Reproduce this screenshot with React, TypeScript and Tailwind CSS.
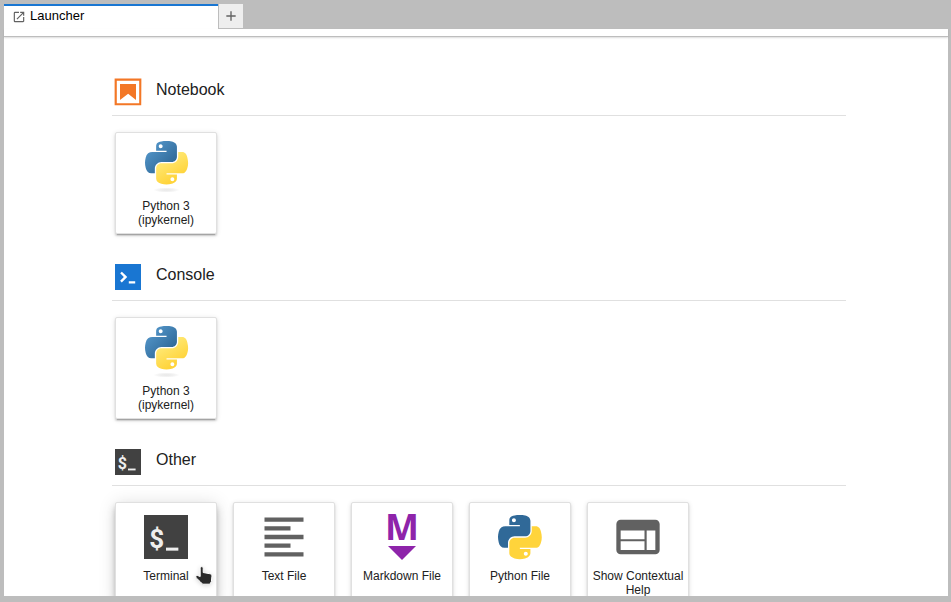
import type { ReactNode } from "react";

function PythonShapes({ blue, yellow }: { blue: string; yellow: string }) {
  return (
    <>
      <path
        fill={blue}
        d="M54.919 0c-4.584.021-8.961.412-12.813 1.094-11.346 2.004-13.406 6.2-13.406 13.937v10.219h26.812v3.406H18.637c-7.792 0-14.616 4.684-16.75 13.594-2.462 10.213-2.571 16.586 0 27.25 1.906 7.938 6.458 13.594 14.25 13.594h9.219v-12.25c0-8.85 7.657-16.657 16.75-16.657h26.781c7.455 0 13.407-6.138 13.407-13.625V15.031c0-7.266-6.13-12.725-13.407-13.937C64.282.327 59.502-.02 54.919 0zm-14.5 8.219c2.769 0 5.031 2.298 5.031 5.125 0 2.816-2.262 5.094-5.031 5.094-2.78 0-5.032-2.278-5.032-5.094 0-2.827 2.252-5.125 5.032-5.125z"
      />
      <path
        fill={yellow}
        d="M85.638 28.657v11.906c0 9.231-7.826 17-16.75 17H42.106c-7.336 0-13.406 6.279-13.406 13.625V96.72c0 7.266 6.319 11.54 13.406 13.625 8.488 2.496 16.626 2.947 26.782 0 6.75-1.954 13.406-5.888 13.406-13.625V86.5H55.512v-3.406h40.188c7.793 0 10.696-5.435 13.406-13.594 2.8-8.399 2.68-16.476 0-27.25-1.926-7.757-5.603-13.593-13.406-13.593zM70.575 93.313c2.78 0 5.032 2.278 5.032 5.094 0 2.826-2.252 5.125-5.032 5.125-2.769 0-5.031-2.299-5.031-5.125 0-2.816 2.262-5.094 5.031-5.094z"
      />
    </>
  );
}

function KernelIcon({ id }: { id: string }) {
  return (
    <svg className="size-[52px]" viewBox="0 0 52 52" aria-hidden="true">
      <defs>
        <linearGradient id={`${id}-blue`} x1="0" y1="0" x2="0.8" y2="0.8">
          <stop offset="0" stopColor="#5a9fd4" />
          <stop offset="1" stopColor="#306998" />
        </linearGradient>
        <linearGradient id={`${id}-yellow`} x1="0.3" y1="0.2" x2="0.65" y2="0.8">
          <stop offset="0" stopColor="#ffe873" />
          <stop offset="1" stopColor="#ffd43b" />
        </linearGradient>
        <radialGradient id={`${id}-shade`}>
          <stop offset="0" stopColor="#b8b8b8" stopOpacity="0.3" />
          <stop offset="1" stopColor="#7f7f7f" stopOpacity="0" />
        </radialGradient>
      </defs>
      <ellipse cx="26.500" cy="49" rx="13" ry="2.500" fill={`url(#${id}-shade)`} />
      <g transform="translate(5 0) scale(0.388)">
        <PythonShapes blue={`url(#${id}-blue)`} yellow={`url(#${id}-yellow)`} />
      </g>
    </svg>
  );
}

function PythonFileIcon() {
  return (
    <svg className="size-[52px]" viewBox="0 0 52 52" aria-hidden="true">
      <g transform="translate(4 4) scale(0.394)">
        <PythonShapes blue="#306998" yellow="#ffd43b" />
      </g>
    </svg>
  );
}

function TerminalIcon({ className }: { className: string }) {
  return (
    <svg className={className} viewBox="0 0 24 24" aria-hidden="true">
      <rect x="2" y="2" width="20" height="20" fill="#414141" shapeRendering="crispEdges" />
      <text x="4.300" y="17" fontFamily="Roboto, sans-serif" fontWeight="700" fontSize="12" fill="#eeeeee">
        $
      </text>
      <rect x="12" y="16.900" width="5.700" height="1.400" fill="#eeeeee" />
    </svg>
  );
}

function TextFileIcon() {
  return (
    <svg className="size-[52px]" viewBox="0 0 24 24" fill="#616161" aria-hidden="true">
      <path d="M15 15H3v2h12v-2zm0-8H3v2h12V7zM3 13h18v-2H3v2zm0 8h18v-2H3v2zM3 3v2h18V3H3z" />
    </svg>
  );
}

function MarkdownIcon() {
  return (
    <svg className="size-[52px] overflow-visible" viewBox="0 0 52 52" fill="#8e24aa" aria-hidden="true">
      <text
        x="26"
        y="29"
        textAnchor="middle"
        fontFamily="'Open Sans', 'Noto Sans', sans-serif"
        fontWeight="700"
        fontSize="36"
      >
        M
      </text>
      <path d="M12 35h28L26 49z" />
    </svg>
  );
}

function InspectorIcon() {
  return (
    <svg className="size-[52px]" viewBox="0 0 24 24" fill="#616161" aria-hidden="true">
      <path d="M20 4H4c-1.1 0-1.99.9-1.99 2L2 18c0 1.1.9 2 2 2h16c1.1 0 2-.9 2-2V6c0-1.1-.9-2-2-2zm-5 14H4v-4h11v4zm0-5H4V9h11v4zm5 5h-4V9h4v9z" />
    </svg>
  );
}

function NotebookIcon() {
  return (
    <svg className="size-8" viewBox="0 0 22 22" fill="#f37726" aria-hidden="true">
      <path d="M18.7 3.3v15.4H3.3V3.3h15.4m1.5-1.5H1.8v18.3h18.3l.1-18.3z" />
      <path d="M16.5 16.5l-5.4-4.3-5.6 4.3v-11h11z" />
    </svg>
  );
}

function ConsoleIcon() {
  return (
    <svg className="size-8" viewBox="0 0 200 200" aria-hidden="true">
      <path fill="#1976d2" d="M20 19.8h160v159.9H20z" shapeRendering="crispEdges" />
      <path
        fill="#fff"
        d="M105 127.3h40v12.8h-40zM51.1 77L74 99.9l-23.3 23.3 10.5 10.5 23.3-23.3L95 99.9 84.5 89.4 61.6 66.5z"
      />
    </svg>
  );
}

function LauncherIcon() {
  return (
    <svg className="size-3.5" viewBox="0 0 24 24" fill="#616161" aria-hidden="true">
      <path d="M19 19H5V5h7V3H5a2 2 0 00-2 2v14a2 2 0 002 2h14c1.1 0 2-.9 2-2v-7h-2v7zM14 3v2h3.59l-9.83 9.83 1.41 1.41L19 6.41V10h2V3h-7z" />
    </svg>
  );
}

function HandPointer() {
  return (
    <svg
      className="pointer-events-none absolute top-[63px] left-[79px] h-5 w-[18px] drop-shadow-sm"
      viewBox="0 0 18 20"
      aria-hidden="true"
    >
      <path
        d="M5.200 2.200c0-2 3-2 3 0V6.500l6.500 1.200c1.500.3 2.300 1 2.200 2.500l-.5 5.300-1.500 2.700H7.700L5 15.500 1.500 12.200c-1.500-1.400-.5-3 1-2.700l2.700 1z"
        fill="#2b2b2b"
        stroke="#fff"
        strokeWidth="1"
        strokeLinejoin="round"
      />
    </svg>
  );
}

function Card({ icon, label, hovered = false }: { icon: ReactNode; label: string; hovered?: boolean }) {
  const shadow = hovered
    ? "shadow-[0_3px_5px_-1px_rgba(0,0,0,0.2),0_6px_10px_0_rgba(0,0,0,0.14),0_1px_18px_0_rgba(0,0,0,0.12)]"
    : "shadow-[0_3px_1px_-2px_rgba(0,0,0,0.2),0_2px_2px_0_rgba(0,0,0,0.14),0_1px_5px_0_rgba(0,0,0,0.12)]";
  return (
    <button
      type="button"
      className={`relative flex h-[102px] w-[102px] shrink-0 cursor-pointer flex-col items-center rounded-[2px] border border-[#e0e0e0] bg-white pt-2 ${shadow}`}
    >
      {icon}
      <span className="mt-1.5 w-full text-center text-xs leading-[14px]">{label}</span>
      {hovered && <HandPointer />}
    </button>
  );
}

function Section({ icon, title, children }: { icon: ReactNode; title: string; children: ReactNode }) {
  return (
    <section>
      <header className="flex items-start gap-3 border-b border-[#e0e0e0] pb-[7px]">
        {icon}
        <h2 className="mt-1 text-base leading-5">{title}</h2>
      </header>
      <div className="mt-4 ml-[3px] flex gap-4">{children}</div>
    </section>
  );
}

export default function App() {
  return (
    <div className="flex h-screen flex-col overflow-hidden bg-[#bdbdbd] pt-1 pr-[3px] pb-1.5 pl-1 font-['Liberation_Sans',Arial,sans-serif] text-[#212121]">
      <div className="flex h-[25px] shrink-0" role="tablist">
        <button
          type="button"
          role="tab"
          aria-selected="true"
          className="flex w-[214px] items-center gap-1 border-t-2 border-[#1976d2] bg-white pb-0.5 pl-2 text-[13px] leading-4 text-black"
        >
          <LauncherIcon />
          <span className="pb-0.5">Launcher</span>
        </button>
        <button
          type="button"
          aria-label="New Launcher"
          className="ml-px flex h-6 w-6 items-center justify-center bg-[#eeeeee]"
        >
          <svg className="size-4" viewBox="0 0 24 24" fill="#616161" aria-hidden="true">
            <path d="M19 13h-6v6h-2v-6H5v-2h6V5h2v6h6v2z" />
          </svg>
        </button>
      </div>
      <div className="relative h-2 shrink-0 border-b border-[#bdbdbd] bg-white shadow-[0_1px_2px_0_rgba(0,0,0,0.14)]" />
      <main className="flex min-h-0 flex-1 flex-col gap-[27px] overflow-hidden bg-white pt-[39px] pr-[102px] pl-[108px]">
        <Section icon={<NotebookIcon />} title="Notebook">
          <Card icon={<KernelIcon id="notebook" />} label="Python 3 (ipykernel)" />
        </Section>
        <Section icon={<ConsoleIcon />} title="Console">
          <Card icon={<KernelIcon id="console" />} label="Python 3 (ipykernel)" />
        </Section>
        <Section icon={<TerminalIcon className="size-8" />} title="Other">
          <Card icon={<TerminalIcon className="size-[52px]" />} label="Terminal" hovered />
          <Card icon={<TextFileIcon />} label="Text File" />
          <Card icon={<MarkdownIcon />} label="Markdown File" />
          <Card icon={<PythonFileIcon />} label="Python File" />
          <Card icon={<InspectorIcon />} label="Show Contextual Help" />
        </Section>
      </main>
    </div>
  );
}
